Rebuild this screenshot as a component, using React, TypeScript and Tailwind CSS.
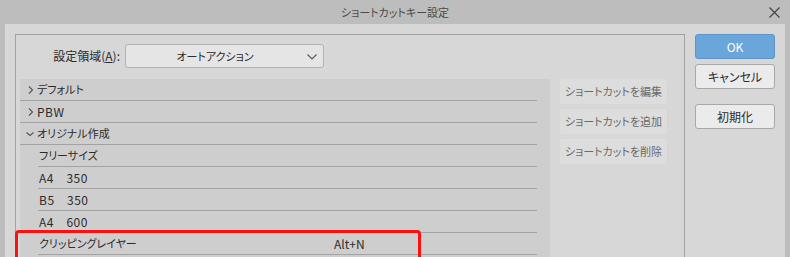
const font = { fontFamily: '"Noto Sans CJK JP", "Noto Sans", sans-serif' };

type Row = { label: string; level: 0 | 1; state?: "closed" | "open"; key?: string };

const rows: Row[] = [
  { label: "デフォルト", level: 0, state: "closed" },
  { label: "PBW", level: 0, state: "closed" },
  { label: "オリジナル作成", level: 0, state: "open" },
  { label: "フリーサイズ", level: 1 },
  { label: "A4\u3000350", level: 1 },
  { label: "B5\u3000350", level: 1 },
  { label: "A4\u3000600", level: 1 },
  { label: "クリッピングレイヤー", level: 1, key: "Alt+N" },
];

// proportional kana, closer to the narrow UI font of the original
const jp = "text-[12px] [font-feature-settings:'palt']";
const jpSm = "text-[11px] [font-feature-settings:'palt']";

function Chevron({ open }: { open: boolean }) {
  return open ? (
    <svg width="8" height="6" viewBox="0 0 8 6" className="mr-[3px] ml-[6px]">
      <path d="M0.5 1.5 L4 4.5 L7.5 1.5" stroke="#555" strokeWidth="1.1" fill="none" />
    </svg>
  ) : (
    <svg width="6" height="8" viewBox="0 0 6 8" className="mr-[3px] ml-[8px]">
      <path d="M1 0.5 L4.5 4 L1 7.5" stroke="#555" strokeWidth="1.1" fill="none" />
    </svg>
  );
}

function ListRow({ row }: { row: Row }) {
  const latin = /^[A-Z0-9]/.test(row.label);
  return (
    <div className={`flex h-[22px] mr-[13px] border-b border-[#a3a3a3] ${row.level === 1 ? "ml-[18px]" : ""}`}>
      <div className="flex items-center text-[#2b2b2b] whitespace-nowrap">
        {row.level === 0 && <Chevron open={row.state === "open"} />}
        <span
          className={`${latin ? "text-[12px] tracking-[0.5px]" : jpSm} ${row.level === 1 ? "pl-[1px] w-[296px]" : ""}`}
        >
          {row.label}
        </span>
        {row.key && <span className="text-[12px]">{row.key}</span>}
      </div>
    </div>
  );
}

function SideButton({ children }: { children: string }) {
  return (
    <div
      className={`h-[25px] w-[107px] rounded-[3px] bg-[#dddddd] flex items-center justify-center whitespace-nowrap text-[#6a6a6a] ${jpSm}`}
    >
      {children}
    </div>
  );
}

export default function App() {
  return (
    <div className="w-[790px] h-[257px] bg-[#bdbdbd] overflow-hidden relative" style={font}>
      <div className={`h-6 flex items-center justify-center relative text-[#4a4a4a] ${jpSm}`}>
        ショートカットキー設定
        <svg width="11" height="11" viewBox="0 0 11 11" className="absolute right-[10px] top-[7px]">
          <path d="M0.5 0.5 L10.5 10.5 M10.5 0.5 L0.5 10.5" stroke="#444" strokeWidth="1.2" />
        </svg>
      </div>
      <div className="mx-[5px] h-[233px] bg-[#d7d7d7] flex">
        <div className="ml-[10px] mt-[10px] w-[670px] border border-[#a2a2a2] border-b-0 pt-[9px] pl-[4px]">
          <div className="flex items-center h-6">
            <span className={`w-[103px] text-right pr-[3px] text-[#2b2b2b] whitespace-nowrap ${jp}`}>
              設定領域(<span className="underline">A</span>):
            </span>
            <div className="ml-[2px] w-[199px] h-6 rounded-[3px] border border-[#b2b2b2] bg-[#e5e5e5] flex items-center relative">
              <span className={`w-[178px] text-center text-[#2b2b2b] ${jpSm}`}>オートアクション</span>
              <svg width="10" height="6" viewBox="0 0 10 6" className="absolute right-[6px] top-[9px]">
                <path d="M0.5 0.5 L5 5 L9.5 0.5" stroke="#555" strokeWidth="1.1" fill="none" />
              </svg>
            </div>
          </div>
          <div className="flex mt-[11px]">
            <div className="w-[530px] h-[200px] bg-[#cecece]">
              {rows.map((r) => (
                <ListRow key={r.label} row={r} />
              ))}
            </div>
            <div className="ml-[10px] flex flex-col gap-[5px]">
              <SideButton>ショートカットを編集</SideButton>
              <SideButton>ショートカットを追加</SideButton>
              <SideButton>ショートカットを削除</SideButton>
            </div>
          </div>
        </div>
        <div className="ml-[10px] mt-[10px] flex flex-col">
          <div className="w-[80px] h-[25px] rounded-[3px] bg-[#6aa6da] border border-[#5d95c8] flex items-center justify-center text-[12px] text-white">
            OK
          </div>
          <div
            className={`mt-[5px] w-[80px] h-[25px] rounded-[3px] bg-[#ebebeb] border border-[#a8a8a8] flex items-center justify-center text-[#2b2b2b] ${jp}`}
          >
            キャンセル
          </div>
          <div
            className={`mt-[15px] w-[80px] h-[25px] rounded-[3px] bg-[#ebebeb] border border-[#a8a8a8] flex items-center justify-center text-[#2b2b2b] ${jp}`}
          >
            初期化
          </div>
        </div>
      </div>
      <div className="absolute left-[15px] top-[230px] w-[406px] h-[32px] rounded-[4px] border-[3px] border-[#ff1010]" />
    </div>
  );
}
